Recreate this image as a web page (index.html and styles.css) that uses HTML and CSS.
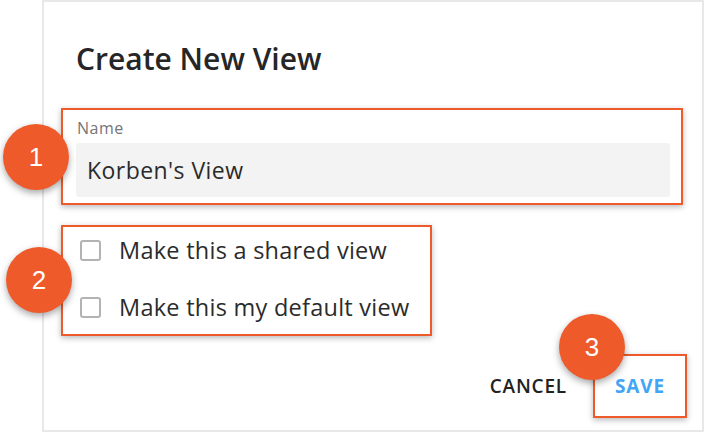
FILE: index.html
```html
<!DOCTYPE html>
<html lang="en">
	<head>
		<meta charset="UTF-8">
		<title>Create New View</title>
		<link rel="stylesheet" href="styles.css">
	</head>
	<body>
		<div class="dialog">
			<h2 class="dialogTitle">Create New View</h2>

			<div class="callout calloutName">
				<span class="marker markerName">1</span>
				<label class="fieldLabel">Name</label>
				<div class="textField">Korben's View</div>
			</div>

			<div class="callout calloutOptions">
				<span class="marker markerOptions">2</span>
				<div class="checkRow"><span class="checkBox"></span><span class="checkText">Make this a shared view</span></div>
				<div class="checkRow"><span class="checkBox"></span><span class="checkText">Make this my default view</span></div>
			</div>

			<div class="actions">
				<span class="button cancelButton">CANCEL</span>
				<div class="callout calloutSave">
					<span class="marker markerSave">3</span>
					<span class="button saveButton">SAVE</span>
				</div>
			</div>
		</div>
	</body>
</html>
```

FILE: styles.css
```css
body {
	margin: 0;
	background: #ffffff;
	font-family: 'Open Sans', sans-serif;
	color: #262626;
}
.dialog {
	box-sizing: border-box;
	width: 662px;
	height: 432px;
	margin-left: 42px;
	border: 2px solid #e8e8e8;
	background: #ffffff;
}
.dialogTitle {
	margin: 37px 0 0 32px;
	font-size: 30px;
	font-weight: 600;
	line-height: 40px;
	color: #262626;
}
.callout {
	position: relative;
	border: 2px solid #ef5a2a;
	box-shadow: 0 2px 6px rgba(0, 0, 0, 0.28);
}
.marker {
	position: absolute;
	width: 66px;
	height: 66px;
	border-radius: 50%;
	background: #ef5a2a;
	box-shadow: 0 3px 7px rgba(0, 0, 0, 0.35);
	color: #ffffff;
	font-family: 'Liberation Sans', Arial, sans-serif;
	font-size: 26px;
	line-height: 66px;
	text-align: center;
	z-index: 2;
}
.calloutName {
	margin: 29px 19px 0 17px;
	padding: 9px 11px 6px 13px;
}
.markerName {
	left: -60px;
	top: 14px;
}
.fieldLabel {
	display: block;
	margin-left: 1px;
	font-size: 16px;
	line-height: 19px;
	letter-spacing: 0.5px;
	color: #757575;
}
.textField {
	margin-top: 5px;
	height: 54px;
	padding-left: 11px;
	border-radius: 3px;
	background: #f3f3f3;
	font-size: 23px;
	line-height: 54px;
	letter-spacing: 0.45px;
	color: #2b2b2b;
}
.calloutOptions {
	width: fit-content;
	margin: 20px 0 0 17px;
	padding: 3px 21px 7px 17px;
}
.markerOptions {
	left: -57px;
	top: 20px;
}
.checkRow {
	display: flex;
	align-items: center;
	height: 40px;
}
.checkRow + .checkRow {
	margin-top: 17px;
}
.checkBox {
	box-sizing: border-box;
	width: 21px;
	height: 21px;
	border: 2px solid #b3b3b3;
	border-radius: 3px;
}
.checkText {
	margin-left: 18px;
	font-size: 23.5px;
	letter-spacing: 0.26px;
	color: #2b2b2b;
}
.actions {
	display: flex;
	justify-content: flex-end;
	align-items: center;
	margin: 18px 15px 0 0;
}
.button {
	font-size: 19px;
	font-weight: 700;
	letter-spacing: 0.8px;
}
.cancelButton {
	margin-right: 26px;
	font-weight: 600;
	color: #222222;
}
.calloutSave {
	box-sizing: border-box;
	width: 94px;
	height: 64px;
	display: flex;
	align-items: center;
	justify-content: center;
}
.markerSave {
	left: -36px;
	top: -42px;
}
.saveButton {
	color: #42a5f5;
}
```
